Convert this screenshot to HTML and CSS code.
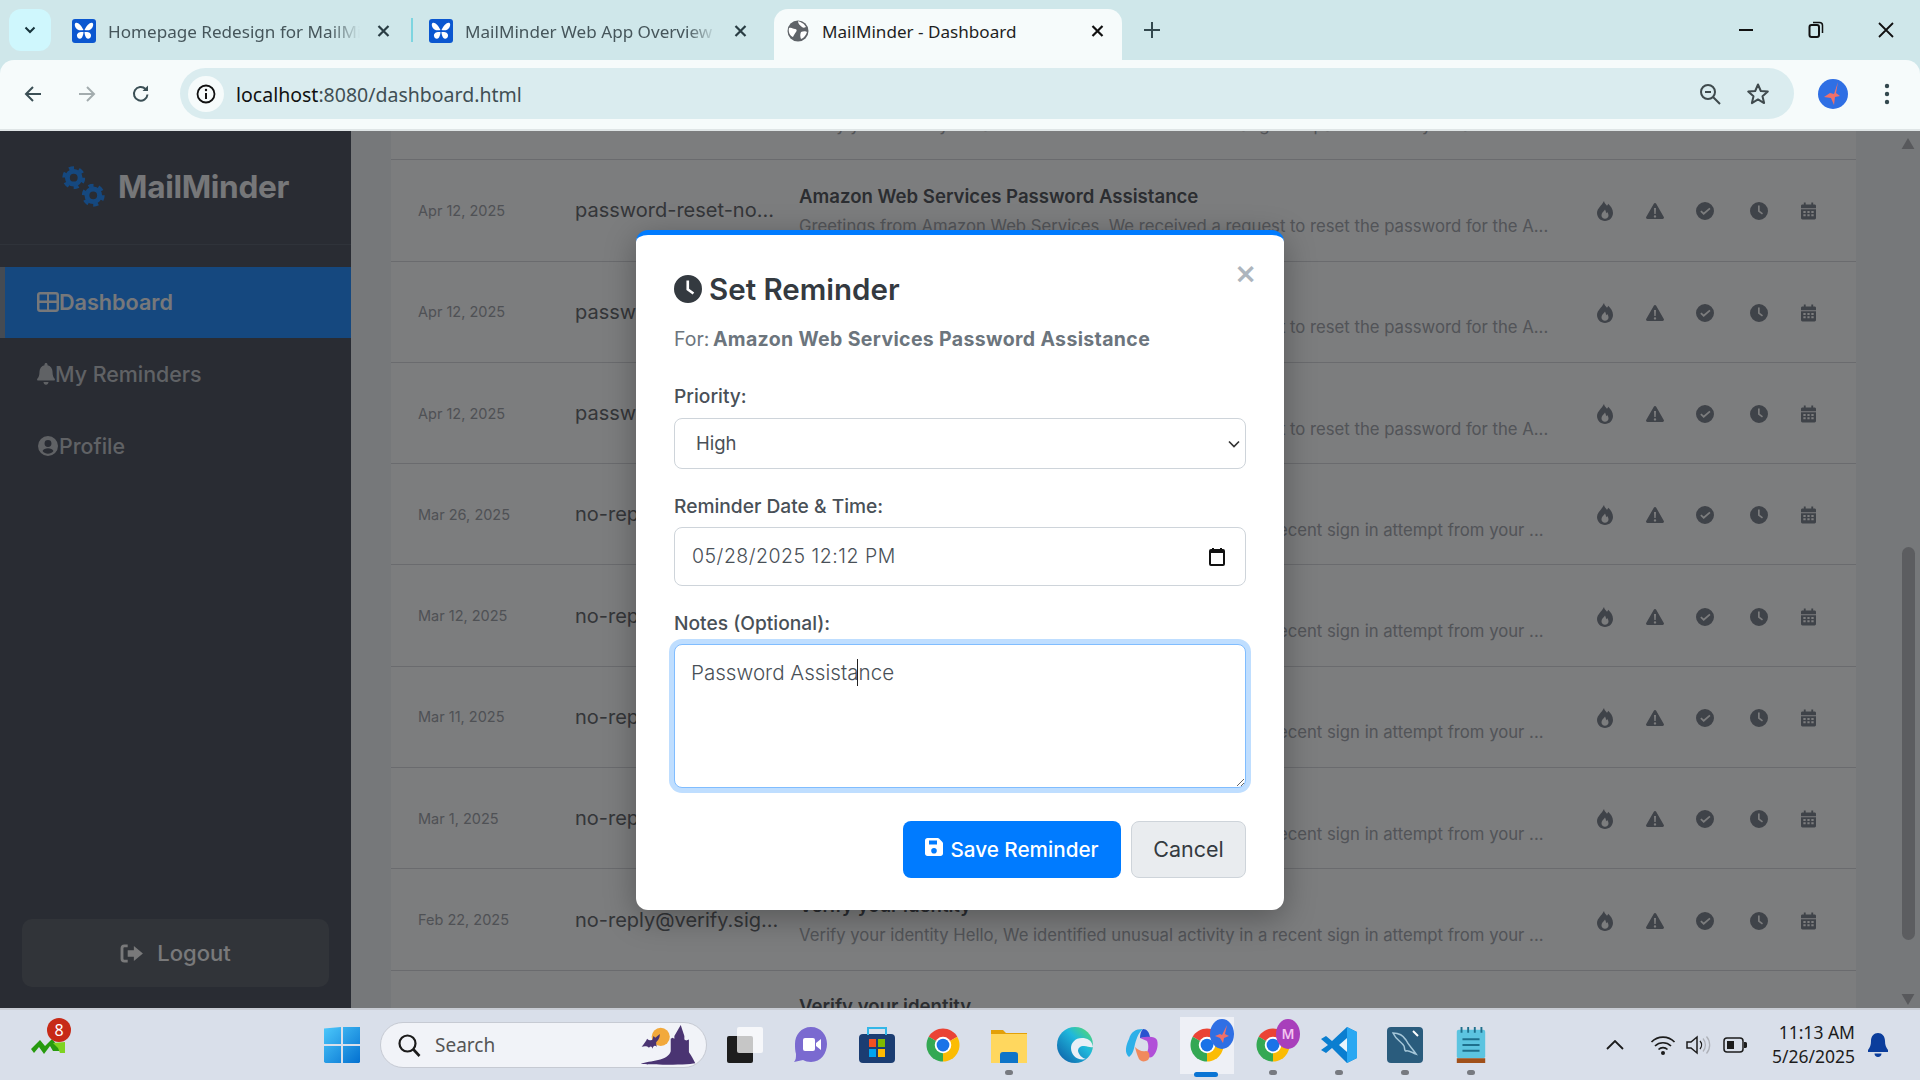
FILE: index.html
```html
<!DOCTYPE html>
<html lang="en">
<head>
<meta charset="utf-8">
<title>MailMinder - Dashboard</title>
<link rel="stylesheet" href="styles.css">
</head>
<body>
<svg class="defs" width="0" height="0" aria-hidden="true">
  <symbol id="i-fire" viewBox="0 0 16 20"><path fill-rule="evenodd" d="M7 0c.5 2.500 2 3.600 3 4.700.7-.5 1-1.200 1.200-1.900C13.800 5 16 8.500 16 12c0 4.400-3.600 8-8 8s-8-3.600-8-8C0 7.500 4.800 4.500 7 0zM8 8.500c-1 1.800-3.500 3-3.500 6 0 2 1.600 3.200 3.500 3.200s3.500-1.300 3.500-3.200c0-1.300-.6-2.600-1.400-3.500-.3.600-.6 1-1 1.200-.1-1.300-.5-2.500-1.100-3.700z"/></symbol>
  <symbol id="i-warn" viewBox="0 0 18 16"><path fill-rule="evenodd" d="M9 0c.5 0 1 .3 1.200.7l7.600 13.200c.5.900-.1 2.100-1.200 2.100H1.400C.3 16-.3 14.800.2 13.900L7.800.7C8 .3 8.500 0 9 0zM8 5l.3 6h1.400L10 5H8zm1 7.200a1.200 1.200 0 1 0 0 2.400 1.200 1.200 0 0 0 0-2.400z"/></symbol>
  <symbol id="i-check" viewBox="0 0 18 18"><path fill-rule="evenodd" d="M9 0a9 9 0 1 1 0 18A9 9 0 0 1 9 0zm4.400 5.800L7.700 10.600 5.400 8.500 4.300 9.700l3.400 3.200 6.800-5.900-1.100-1.200z"/></symbol>
  <symbol id="i-clock" viewBox="0 0 18 18"><path fill-rule="evenodd" d="M9 0a9 9 0 1 1 0 18A9 9 0 0 1 9 0zM8 3.500v6.100l4 3 1-1.400-3.300-2.400V3.500H8z"/></symbol>
  <symbol id="i-cal" viewBox="0 0 16 18"><path fill-rule="evenodd" d="M3 0h2v2h6V0h2v2h1.500C15.300 2 16 2.700 16 3.500V6H0V3.500C0 2.700.7 2 1.500 2H3V0zM0 7h16v9.500c0 .8-.7 1.500-1.500 1.500h-13C.7 18 0 17.300 0 16.500V7zm2.500 2v2h2.500V9H2.500zm4.300 0v2h2.400V9H6.800zm4.200 0v2h2.500V9H11zm-8.500 3.500v2h2.500v-2H2.500zm4.300 0v2h2.400v-2H6.800zm4.200 0v2h2.500v-2H11z"/></symbol>
  <symbol id="i-gear" viewBox="0 0 24 24"><circle cx="12" cy="12" r="6.500" fill="none" stroke="currentColor" stroke-width="5"/><circle cx="12" cy="12" r="10" fill="none" stroke="currentColor" stroke-width="3.500" stroke-dasharray="5.200 5.270"/></symbol>
  <symbol id="i-butterfly" viewBox="0 0 24 24"><rect width="24" height="24" rx="3" fill="#0b57d0"/><path fill="#fff" d="M11.500 11C9 6 6 3 3.500 4c-1.500 1-.5 5 2 6.500 1.500 1 4 1 6 .5zm1 0c2.500-5 5.500-8 8-7 1.500 1 .5 5-2 6.500-1.500 1-4 1-6 .5zM11.500 13c-4-.5-7 1-6.500 4 .5 3 3.500 3.500 5 1.500.8-1.500 1.500-3.500 1.500-5.500zm1 0c4-.5 7 1 6.500 4-.5 3-3.500 3.500-5 1.500-.8-1.500-1.500-3.500-1.500-5.500z"/></symbol>
  <symbol id="i-chrome" viewBox="0 0 48 48"><path fill="#ea4335" d="M24 24L4.950 13A22 22 0 0 1 43.050 13Z"/><path fill="#fbbc04" d="M24 24L43.050 13A22 22 0 0 1 24 46Z"/><path fill="#34a853" d="M24 24L24 46A22 22 0 0 1 4.950 13Z"/><circle cx="24" cy="24" r="11" fill="#fff"/><circle cx="24" cy="24" r="8.500" fill="#1a73e8"/></symbol>
  <symbol id="i-x" viewBox="0 0 13 12"><path d="M1.500 1l10 10M11.500 1l-10 10" fill="none" stroke="currentColor" stroke-width="2.200"/></symbol>
</svg>

<header class="tabstrip">
  <button class="tab-search" type="button"><svg width="12" height="8" viewBox="0 0 12 8"><path d="M1.500 1.500L6 6l4.500-4.500" fill="none" stroke="#16333a" stroke-width="2"/></svg></button>
  <div class="tab">
    <svg class="favicon"><use href="#i-butterfly"/></svg>
    <span class="tab-title">Homepage Redesign for MailMinder</span>
    <svg class="tab-close"><use href="#i-x"/></svg>
  </div>
  <div class="tab-sep"></div>
  <div class="tab">
    <svg class="favicon"><use href="#i-butterfly"/></svg>
    <span class="tab-title">MailMinder Web App Overview</span>
    <svg class="tab-close"><use href="#i-x"/></svg>
  </div>
  <div class="tab tab--active">
    <svg class="favicon" viewBox="0 0 24 24"><circle cx="12" cy="12" r="10.500" fill="#5f6368"/><path fill="#fff" d="M3 9c3-1 4 1 6 1s2 2 1 3-2 3-3 5c-3-1-5-5-4-9zm9-7c2 1 6 2 8 6-2 1-3 1-4 0-2-2-4-3-4-6zm3 11c2-1 5-1 6 0-1 3-3 6-6 7-1-2-1-5 0-7z"/></svg>
    <span class="tab-title tab-title--plain">MailMinder - Dashboard</span>
    <svg class="tab-close tab-close--active"><use href="#i-x"/></svg>
  </div>
  <svg class="new-tab" width="18" height="18" viewBox="0 0 18 18"><path d="M9 1v16M1 9h16" stroke="#33484e" stroke-width="2"/></svg>
  <div class="window-controls">
    <svg width="16" height="16" viewBox="0 0 16 16"><path d="M1 8h14" stroke="#111" stroke-width="2"/></svg>
    <svg width="16" height="18" viewBox="0 0 16 18"><rect x="1.500" y="4" width="9.500" height="12" rx="2" fill="none" stroke="#111" stroke-width="2"/><path d="M5 1.500h6.500a3 3 0 0 1 3 3V12" fill="none" stroke="#111" stroke-width="1.500"/></svg>
    <svg width="16" height="16" viewBox="0 0 16 16"><path d="M1 1l14 14M15 1L1 15" stroke="#111" stroke-width="1.800"/></svg>
  </div>
</header>

<div class="toolbar">
  <svg class="nav-btn" viewBox="0 0 20 20"><path d="M18 10H3M10 3l-7 7 7 7" fill="none" stroke="#3b4f55" stroke-width="2"/></svg>
  <svg class="nav-btn" viewBox="0 0 20 20"><path d="M2 10h15M10 3l7 7-7 7" fill="none" stroke="#a3acae" stroke-width="2"/></svg>
  <svg class="nav-btn" viewBox="0 0 20 20"><path d="M16.500 10.500A6.800 6.800 0 1 1 14.500 5" fill="none" stroke="#3b4f55" stroke-width="2"/><path d="M17 1.500V7h-5.500z" fill="#3b4f55"/></svg>
  <div class="omnibox">
    <span class="site-info"><svg width="20" height="20" viewBox="0 0 20 20"><circle cx="10" cy="10" r="8.500" fill="none" stroke="#111" stroke-width="1.800"/><path d="M10 9v6" stroke="#111" stroke-width="2"/><circle cx="10" cy="6" r="1.200" fill="#111"/></svg></span>
    <span class="url"><span class="url-host">localhost</span>:8080/dashboard.html</span>
    <svg class="omni-icon omni-icon--zoom" viewBox="0 0 22 22"><circle cx="9" cy="9" r="7" fill="none" stroke="#3f4a4d" stroke-width="2"/><path d="M6 9h6M14 14l7 7" stroke="#3f4a4d" stroke-width="2"/></svg>
    <svg class="omni-icon" viewBox="0 0 24 24"><path d="M12 2.500l2.800 6.500 7 .6-5.300 4.600 1.600 6.900-6.100-3.700-6.100 3.700 1.600-6.900L2.200 9.600l7-.6z" fill="none" stroke="#3f4a4d" stroke-width="2" stroke-linejoin="round"/></svg>
  </div>
  <svg class="avatar" viewBox="0 0 30 30"><circle cx="15" cy="15" r="15" fill="#2f6fe4"/><path d="M20 3l-2 11 4 3-5 1-1 8-3-7-7-1 6-4 4 1z" fill="#f0706a"/></svg>
  <svg class="menu-dots" width="6" height="22" viewBox="0 0 6 22"><circle cx="3" cy="3" r="2.200" fill="#33484e"/><circle cx="3" cy="11" r="2.200" fill="#33484e"/><circle cx="3" cy="19" r="2.200" fill="#33484e"/></svg>
</div>

<div class="app">
  <aside class="sidebar">
    <div class="brand">
      <svg class="brand-gears" viewBox="0 0 44 42"><use href="#i-gear" x="0" y="0" width="24" height="24"/><use href="#i-gear" x="20" y="18" width="24" height="24"/></svg>
      <span class="brand-name">MailMinder</span>
    </div>
    <nav class="nav">
      <a class="nav-item nav-item--active"><svg class="nav-icon" viewBox="0 0 22 20"><path fill-rule="evenodd" d="M3 0h16c1.700 0 3 1.300 3 3v14c0 1.700-1.300 3-3 3H3c-1.700 0-3-1.300-3-3V3c0-1.700 1.300-3 3-3zm-.5 3v5.500H10V2.500H3c-.3 0-.5.200-.5.500zm9.500-.5v6h7.500V3c0-.3-.2-.5-.5-.5h-7zm-9.500 8.500V17c0 .3.200.5.500.5h7V11H2.500zm9.500 0v6.500h7c.3 0 .5-.2.500-.5v-6H12z"/></svg>Dashboard</a>
      <a class="nav-item"><svg class="nav-icon nav-icon--bell" viewBox="0 0 18 22"><path d="M9 0c1 0 1.500.7 1.500 1.500v.7c3 .7 5 3.300 5 6.300 0 4 1 6 2.200 7.300.5.600.1 1.700-.8 1.700H1.100c-.9 0-1.300-1.100-.8-1.700C1.500 14.500 2.500 12.500 2.500 8.500c0-3 2-5.600 5-6.300v-.7C7.500.7 8 0 9 0zM6.500 19h5c0 1.500-1.100 2.800-2.500 2.800S6.500 20.500 6.500 19z"/></svg>My Reminders</a>
      <a class="nav-item"><svg class="nav-icon" viewBox="0 0 22 22"><path fill-rule="evenodd" d="M11 0a11 11 0 1 1 0 22A11 11 0 0 1 11 0zm0 4.500a3.800 3.800 0 1 0 0 7.600 3.800 3.800 0 0 0 0-7.600zM11 13.500c-2.800 0-5 1.100-6 3 1.400 1.900 3.600 3 6 3s4.600-1.100 6-3c-1-1.900-3.200-3-6-3z"/></svg>Profile</a>
    </nav>
    <button class="logout" type="button"><svg class="logout-icon" viewBox="0 0 24 20"><path d="M8 2H4.500C3.100 2 2 3.100 2 4.500v11C2 16.900 3.100 18 4.500 18H8" fill="none" stroke="currentColor" stroke-width="3"/><path fill="currentColor" d="M14.500 2L24 10l-9.500 8v-4.500H8v-7h6.500z"/></svg>Logout</button>
  </aside>

  <main class="main">
    <div class="list">
      <article class="row"><span class="date">Apr 12, 2025</span><span class="sender">password-reset-no...</span><div class="subject"><b class="title">Amazon Web Services Password Assistance</b><span class="preview">Verify your identity. Please use this one-time code to change the password for your acco...</span></div><div class="actions"><svg class="a-fire"><use href="#i-fire"/></svg><svg class="a-warn"><use href="#i-warn"/></svg><svg class="a-check"><use href="#i-check"/></svg><svg class="a-clock"><use href="#i-clock"/></svg><svg class="a-cal"><use href="#i-cal"/></svg></div></article>
      <article class="row"><span class="date">Apr 12, 2025</span><span class="sender">password-reset-no...</span><div class="subject"><b class="title">Amazon Web Services Password Assistance</b><span class="preview">Greetings from Amazon Web Services, We received a request to reset the password for the A...</span></div><div class="actions"><svg class="a-fire"><use href="#i-fire"/></svg><svg class="a-warn"><use href="#i-warn"/></svg><svg class="a-check"><use href="#i-check"/></svg><svg class="a-clock"><use href="#i-clock"/></svg><svg class="a-cal"><use href="#i-cal"/></svg></div></article>
      <article class="row"><span class="date">Apr 12, 2025</span><span class="sender">password-reset-no...</span><div class="subject"><b class="title">Amazon Web Services Password Assistance</b><span class="preview">Greetings from Amazon Web Services, We received a request to reset the password for the A...</span></div><div class="actions"><svg class="a-fire"><use href="#i-fire"/></svg><svg class="a-warn"><use href="#i-warn"/></svg><svg class="a-check"><use href="#i-check"/></svg><svg class="a-clock"><use href="#i-clock"/></svg><svg class="a-cal"><use href="#i-cal"/></svg></div></article>
      <article class="row"><span class="date">Apr 12, 2025</span><span class="sender">password-reset-no...</span><div class="subject"><b class="title">Amazon Web Services Password Assistance</b><span class="preview">Greetings from Amazon Web Services, We received a request to reset the password for the A...</span></div><div class="actions"><svg class="a-fire"><use href="#i-fire"/></svg><svg class="a-warn"><use href="#i-warn"/></svg><svg class="a-check"><use href="#i-check"/></svg><svg class="a-clock"><use href="#i-clock"/></svg><svg class="a-cal"><use href="#i-cal"/></svg></div></article>
      <article class="row"><span class="date">Mar 26, 2025</span><span class="sender">no-reply@verify.sig...</span><div class="subject"><b class="title">Verify your identity</b><span class="preview">Verify your identity Hello, We identified unusual activity in a recent sign in attempt from your ...</span></div><div class="actions"><svg class="a-fire"><use href="#i-fire"/></svg><svg class="a-warn"><use href="#i-warn"/></svg><svg class="a-check"><use href="#i-check"/></svg><svg class="a-clock"><use href="#i-clock"/></svg><svg class="a-cal"><use href="#i-cal"/></svg></div></article>
      <article class="row"><span class="date">Mar 12, 2025</span><span class="sender">no-reply@verify.sig...</span><div class="subject"><b class="title">Verify your identity</b><span class="preview">Verify your identity Hello, We identified unusual activity in a recent sign in attempt from your ...</span></div><div class="actions"><svg class="a-fire"><use href="#i-fire"/></svg><svg class="a-warn"><use href="#i-warn"/></svg><svg class="a-check"><use href="#i-check"/></svg><svg class="a-clock"><use href="#i-clock"/></svg><svg class="a-cal"><use href="#i-cal"/></svg></div></article>
      <article class="row"><span class="date">Mar 11, 2025</span><span class="sender">no-reply@verify.sig...</span><div class="subject"><b class="title">Verify your identity</b><span class="preview">Verify your identity Hello, We identified unusual activity in a recent sign in attempt from your ...</span></div><div class="actions"><svg class="a-fire"><use href="#i-fire"/></svg><svg class="a-warn"><use href="#i-warn"/></svg><svg class="a-check"><use href="#i-check"/></svg><svg class="a-clock"><use href="#i-clock"/></svg><svg class="a-cal"><use href="#i-cal"/></svg></div></article>
      <article class="row"><span class="date">Mar 1, 2025</span><span class="sender">no-reply@verify.sig...</span><div class="subject"><b class="title">Verify your identity</b><span class="preview">Verify your identity Hello, We identified unusual activity in a recent sign in attempt from your ...</span></div><div class="actions"><svg class="a-fire"><use href="#i-fire"/></svg><svg class="a-warn"><use href="#i-warn"/></svg><svg class="a-check"><use href="#i-check"/></svg><svg class="a-clock"><use href="#i-clock"/></svg><svg class="a-cal"><use href="#i-cal"/></svg></div></article>
      <article class="row"><span class="date">Feb 22, 2025</span><span class="sender">no-reply@verify.sig...</span><div class="subject"><b class="title">Verify your identity</b><span class="preview">Verify your identity Hello, We identified unusual activity in a recent sign in attempt from your ...</span></div><div class="actions"><svg class="a-fire"><use href="#i-fire"/></svg><svg class="a-warn"><use href="#i-warn"/></svg><svg class="a-check"><use href="#i-check"/></svg><svg class="a-clock"><use href="#i-clock"/></svg><svg class="a-cal"><use href="#i-cal"/></svg></div></article>
      <article class="row"><span class="date">Feb 20, 2025</span><span class="sender">no-reply@verify.sig...</span><div class="subject"><b class="title">Verify your identity</b><span class="preview">Verify your identity Hello, We identified unusual activity in a recent sign in attempt from your ...</span></div><div class="actions"><svg class="a-fire"><use href="#i-fire"/></svg><svg class="a-warn"><use href="#i-warn"/></svg><svg class="a-check"><use href="#i-check"/></svg><svg class="a-clock"><use href="#i-clock"/></svg><svg class="a-cal"><use href="#i-cal"/></svg></div></article>
    </div>
    <div class="scrollbar">
      <svg class="sb-arrow" viewBox="0 0 14 12"><path d="M7 0l7 12H0z"/></svg>
      <div class="sb-thumb"></div>
      <svg class="sb-arrow" viewBox="0 0 14 12"><path d="M0 0h14L7 12z"/></svg>
    </div>
  </main>

  <div class="overlay">
    <section class="modal">
      <span class="modal-close">×</span>
      <h2 class="modal-title"><svg class="modal-clock" viewBox="0 0 18 18"><use href="#i-clock"/></svg>Set Reminder</h2>
      <p class="modal-for">For: <strong>Amazon Web Services Password Assistance</strong></p>
      <form class="form">
        <div class="field">
          <label class="label label--first" for="prio">Priority:</label>
          <div class="select-wrap">
            <select class="control control--select" id="prio"><option>Low</option><option>Medium</option><option selected>High</option></select>
            <svg class="select-chevron" viewBox="0 0 12 8"><path d="M1 1.500l5 5 5-5" fill="none" stroke="#333" stroke-width="1.700"/></svg>
          </div>
        </div>
        <div class="field">
          <label class="label" for="when">Reminder Date &amp; Time:</label>
          <div class="date-wrap">
            <input class="control control--date" id="when" type="text" value="05/28/2025 12:12 PM">
            <svg class="date-icon" viewBox="0 0 16 18"><path d="M4 0v3M12 0v3" stroke="#111" stroke-width="2"/><path d="M1 2h14v3H1z" fill="#111"/><rect x="1" y="2" width="14" height="15" rx="1" fill="none" stroke="#111" stroke-width="2"/></svg>
          </div>
        </div>
        <div class="field">
          <label class="label" for="notes">Notes (Optional):</label>
          <div class="notes-wrap">
            <textarea class="control control--notes" id="notes">Password Assistance</textarea>
            <span class="caret"></span>
          </div>
        </div>
        <div class="buttons">
          <button class="btn btn--save" type="button"><svg class="save-icon" viewBox="0 0 18 18"><path fill="#fff" fill-rule="evenodd" d="M2.500 0h10.200c.500 0 1 .2 1.300.5l3.400 3.400c.4.400.6.900.6 1.400V15.500c0 1.400-1.100 2.500-2.500 2.500h-13C1.100 18 0 16.900 0 15.500v-13C0 1.100 1.100 0 2.500 0zM4 2.500v4h8v-4H4zM9 10a2.800 2.800 0 1 0 0 5.600A2.800 2.800 0 0 0 9 10z"/></svg>Save Reminder</button>
          <button class="btn btn--cancel" type="button">Cancel</button>
        </div>
      </form>
    </section>
  </div>
</div>

<footer class="taskbar">
  <div class="widget">
    <svg width="36" height="20" viewBox="0 0 36 20"><path d="M0 13l9-9 5 6 7-7 5 6 2-2v8h-6l-3-5-6 8-5-7-5 6z" fill="#279a0f"/><path d="M22 7l12-1v11h-5l-2-5z" fill="#7ed321"/></svg>
    <span class="widget-badge">8</span>
  </div>
  <svg class="start" viewBox="0 0 36 36"><defs><linearGradient id="win" x1="0" y1="0" x2="1" y2="1"><stop offset="0" stop-color="#4cc8fb"/><stop offset="1" stop-color="#0370d0"/></linearGradient></defs><path fill="url(#win)" d="M0 1.500L17 0v17H0zM19 0l17 0v17H19zM0 19h17v17H1.500L0 35zM19 19h17v16l-1 1H19z"/></svg>
  <div class="search">
    <svg class="search-icon" viewBox="0 0 24 24"><circle cx="10.500" cy="10.500" r="8" fill="none" stroke="#1b1b1b" stroke-width="2.200"/><path d="M16 16l6.500 7" stroke="#1b1b1b" stroke-width="2.600"/></svg>
    <span class="search-text">Search</span>
    <svg class="search-art" viewBox="0 0 60 44"><circle cx="22" cy="13" r="10" fill="#f2a93b"/><path d="M1 24c2-3 5-6 6-9 2 2 5 2 6 1l1-4 2 2 5-4c0 5-2 7-4 9 0 2 0 3 1 5-3-2-4-1-5 2-1-3-2-3-4-1-2-2-5-2-8-1z" fill="#4a3472"/><path d="M44 0l4 12v4l2 1 3-1v14c3 4 5 8 7 12-8 2-50 2-60 1 10-4 30-3 33-14V15l2-1 2 1v-3z" fill="#4a3472"/></svg>
  </div>
  <div class="apps">
    <div class="app-icon"><svg viewBox="0 0 36 36"><rect x="0" y="9" width="26" height="27" rx="2" fill="#1d1d1d"/><rect x="10" y="0" width="26" height="26" rx="2" fill="#fff" fill-opacity=".75"/></svg></div>
    <div class="app-icon"><svg viewBox="0 0 36 36"><path d="M18 0c10 0 16 8 16 17s-6 18-16 18c-3 0-6-1-8-2l-9 2c2-2 2-5 2-8C2 24 2 20 2 17 2 8 8 0 18 0z" fill="#7a6ad0"/><rect x="10" y="11" width="12" height="13" rx="2" fill="#fff"/><path d="M23 16l5-4v11l-5-4z" fill="#fff"/></svg></div>
    <div class="app-icon"><svg viewBox="0 0 36 36"><rect x="0" y="7" width="36" height="29" rx="4" fill="#1b3d72"/><path d="M9 8V1h18v7" fill="none" stroke="#33b7e8" stroke-width="2"/><rect x="10" y="12" width="7" height="8" fill="#f25022"/><rect x="19" y="12" width="7" height="8" fill="#7fba00"/><rect x="10" y="22" width="7" height="8" fill="#00a4ef"/><rect x="19" y="22" width="7" height="8" fill="#ffb900"/></svg></div>
    <div class="app-icon"><svg viewBox="0 0 48 48"><use href="#i-chrome"/></svg></div>
    <div class="app-icon app-icon--open"><svg viewBox="0 0 36 36"><path d="M0 3h12l3 3h21v30H0z" fill="#e3a008"/><rect y="7" width="36" height="29" fill="#ffd75e"/><path d="M9 36v-8c0-2 1-3 3-3h12c2 0 3 1 3 3v8z" fill="#0e74c8"/></svg></div>
    <div class="app-icon"><svg viewBox="0 0 36 36"><defs><linearGradient id="edge" x1="1" y1="0" x2="0" y2="1"><stop offset="0" stop-color="#5ede5e"/><stop offset=".4" stop-color="#1fb8dc"/><stop offset="1" stop-color="#0c59a4"/></linearGradient></defs><circle cx="18" cy="18" r="18" fill="url(#edge)"/><path d="M36 20c-1-7-6-9-11-9-7 0-11 5-11 10 0 7 6 13 15 11-4-1-7-4-8-8 0-3 2-5 6-5 4 0 6 2 9 1z" fill="#e9eff6"/></svg></div>
    <div class="app-icon"><svg viewBox="0 0 36 36"><path d="M6 12C8 5 12 2 20 2c-4 3-6 8-8 15-1 5-2 10-6 13C1 26 3 18 6 12z" fill="#2db0e8"/><path d="M20 2c4 0 6 3 7 8l-10 1c0-4 1-7 3-9z" fill="#2a52d0"/><path d="M17 11c8-2 15-2 17 2 2 6-1 14-5 17-2 1-5 0-7-1 4-5 4-11 2-15z" fill="#b14fd8"/><path d="M12 20c3 3 7 5 11 4 3 0 5 5 2 9-3 2-7 2-9-1-2-4-3-8-4-12z" fill="#f08a5d"/></svg></div>
    <div class="app-icon app-icon--active"><svg viewBox="0 0 48 48"><use href="#i-chrome"/></svg><svg class="app-pin" viewBox="0 0 24 30"><ellipse cx="12" cy="15" rx="12" ry="15" fill="#2f6fe4"/><path d="M17 6l-2 9 4 2-5 2-1 5-3-5-5-2 5-2 2 1z" fill="#f0706a"/></svg></div>
    <div class="app-icon app-icon--open"><svg viewBox="0 0 48 48"><use href="#i-chrome"/></svg><span class="app-pin app-pin--m">M</span></div>
    <div class="app-icon app-icon--open"><svg viewBox="0 0 36 36"><path d="M26 0l10 5v26l-10 5L11 21l-6 5-5-3 7-5-7-6 5-3 6 5z" fill="#0a7ed0"/><path d="M26 0l10 5v26l-10 5z" fill="#2aa8f2"/><path d="M26 11l-8 7 8 7z" fill="#e9f5fd"/></svg></div>
    <div class="app-icon app-icon--open"><svg viewBox="0 0 36 36"><rect width="36" height="36" rx="4" fill="#2a5c7d"/><path d="M6 6c6 0 10 2 13 7 3 6 6 8 10 14-5-2-8-4-10-3-2 0-1-3-2-5-2-4-8-6-11-13z" fill="none" stroke="#a5c6d8" stroke-width="1.500"/><path d="M26 4l5 5" stroke="#fff" stroke-width="2"/></svg></div>
    <div class="app-icon app-icon--open"><svg viewBox="0 0 30 38"><rect y="3" width="30" height="30" rx="2" fill="#5cc4e0"/><path d="M5 0v6M12 0v6M19 0v6M26 0v6" stroke="#1e6f8c" stroke-width="2"/><path d="M6 13h18M6 19h18M6 25h18" stroke="#1e6f8c" stroke-width="2"/><rect y="33" width="30" height="5" fill="#a0501a"/></svg></div>
  </div>
  <div class="tray">
    <svg class="tray-chev" width="18" height="10" viewBox="0 0 18 10"><path d="M1 9l8-8 8 8" fill="none" stroke="#1c1c1c" stroke-width="1.800"/></svg>
    <svg class="tray-wifi" width="26" height="20" viewBox="0 0 26 20"><path d="M1.500 7a16 16 0 0 1 23 0M5 11a11.500 11.500 0 0 1 16 0M8.500 14.500a6.500 6.500 0 0 1 9 0" fill="none" stroke="#1c1c1c" stroke-width="1.700"/><circle cx="13" cy="18" r="2" fill="#1c1c1c"/></svg>
    <svg class="tray-vol" width="26" height="20" viewBox="0 0 26 20"><path d="M1 7v6h4l6 5V2L5 7z" fill="none" stroke="#1c1c1c" stroke-width="1.500"/><path d="M14 6a6 6 0 0 1 0 8" fill="none" stroke="#1c1c1c" stroke-width="1.300"/><path d="M17 3.500a10 10 0 0 1 0 13M20.500 1.500a13 13 0 0 1 0 17" fill="none" stroke="#aeb1b8" stroke-width="1.300"/></svg>
    <svg class="tray-batt" width="25" height="16" viewBox="0 0 25 16"><rect x="1" y="1" width="19" height="14" rx="3" fill="none" stroke="#1c1c1c" stroke-width="1.500"/><rect x="4" y="4" width="7" height="8" fill="#1c1c1c"/><path d="M21 5h1.500c1 0 1.500.8 1.500 1.500v3c0 .7-.5 1.500-1.500 1.500H21z" fill="#1c1c1c"/></svg>
    <div class="clock"><span>11:13 AM</span><span>5/26/2025</span></div>
    <svg class="tray-bell" width="20" height="24" viewBox="0 0 20 24"><path d="M10 0c4 0 7 3 7 8 0 4 1 6 3 9v2H0v-2c2-3 3-5 3-9 0-5 3-8 7-8zM6.500 20.500h7c0 2-1.500 3.500-3.500 3.500s-3.500-1.500-3.500-3.500z" fill="#0b3d9c"/></svg>
  </div>
</footer>
</body>
</html>
```

FILE: styles.css
```css
* { box-sizing: border-box; }
html, body { margin: 0; height: 100%; }
body {
  width: 1920px;
  height: 1080px;
  overflow: hidden;
  display: flex;
  flex-direction: column;
  font-family: Inter, "Open Sans", sans-serif;
  background: #cfe7ea;
}
.defs { position: absolute; }

/* browser chrome */
.tabstrip {
  height: 60px;
  flex: none;
  display: flex;
  align-items: flex-start;
  padding-left: 9px;
  background: #cfe7ea;
  font-family: "Noto Sans", sans-serif;
}
.tab-search {
  width: 42px;
  height: 42px;
  margin-top: 9px;
  border: 0;
  border-radius: 12px;
  background: #cff7fd;
  display: flex;
  align-items: center;
  justify-content: center;
  padding: 0;
}
.tab {
  width: 360px;
  height: 51px;
  margin-top: 9px;
  padding: 0 0 7px 21px;
  display: flex;
  align-items: center;
  color: #46565b;
  font-size: 17.100px;
  flex: none;
}
.tab-sep { width: 2px; height: 24px; margin: 18px -5px 0 0; background: #7dd5e0; flex: none; }
.favicon { width: 24px; height: 24px; flex: none; margin-right: 12px; }
.tab-title {
  width: 252px;
  flex: none;
  overflow: hidden;
  white-space: nowrap;
  -webkit-mask-image: linear-gradient(90deg, #000 88%, transparent);
  mask-image: linear-gradient(90deg, #000 88%, transparent);
}
.tab-title--plain { -webkit-mask-image: none; mask-image: none; color: #1f1f1f; width: 264px; }
.tab-close { width: 13px; height: 12px; margin-left: 17px; flex: none; color: #2a3d44; }
.tab--active {
  width: 348px;
  margin-left: 6px;
  padding-left: 12px;
  background: #f6fbfb;
  border-radius: 14px 14px 0 0;
}
.tab-close--active { margin-left: 5px; color: #111; }
.new-tab { margin: 21px 0 0 21px; flex: none; }
.window-controls {
  margin-left: auto;
  margin-top: 21px;
  display: flex;
  align-items: center;
  gap: 54px;
  padding-right: 26px;
}
.toolbar {
  height: 71px;
  flex: none;
  display: flex;
  align-items: center;
  padding: 0 0 2px 23px;
  background: #f6fbfb;
  border-bottom: 2px solid #dfe5e6;
  border-radius: 14px 14px 0 0;
}
.nav-btn { width: 20px; height: 20px; flex: none; margin-right: 34px; }
.omnibox {
  width: 1614px;
  flex: none;
  height: 51px;
  margin-left: -5px;
  margin-right: 24px;
  display: flex;
  align-items: center;
  padding: 0 24px 0 8px;
  background: #daecef;
  border-radius: 26px;
}
.site-info {
  width: 36px;
  height: 36px;
  border-radius: 50%;
  background: #f6fbfb;
  display: flex;
  align-items: center;
  justify-content: center;
  margin-right: 12px;
}
.url { font-family: "Noto Sans", sans-serif; font-size: 19.500px; color: #3f4f54; padding-top: 1px; }
.url-host { color: #111; }
.omni-icon { width: 24px; height: 24px; margin-left: 25px; }
.omni-icon--zoom { margin-left: auto; width: 22px; height: 22px; }
.avatar { width: 30px; height: 30px; flex: none; }
.menu-dots { margin-left: 36px; flex: none; }

/* page */
.app {
  position: relative;
  height: 877px;
  flex: none;
  display: flex;
  overflow: hidden;
}
.sidebar {
  width: 351px;
  flex: none;
  display: flex;
  flex-direction: column;
  background: #525866;
  color: #eef0f4;
}
.brand {
  height: 114px;
  flex: none;
  display: flex;
  align-items: center;
  padding: 0 0 2px 62px;
  border-bottom: 1px solid #5f6674;
}
.brand-gears { width: 43px; height: 41px; color: #2a90fe; margin-right: 13px; }
.brand-name { font-size: 31.600px; font-weight: 700; letter-spacing: -.3px; color: #eceef2; }
.nav { padding-top: 22px; display: flex; flex-direction: column; gap: 1px; }
.nav-item {
  height: 71px;
  display: flex;
  align-items: center;
  padding: 0 0 2px 37px;
  font-size: 21.400px;
  font-weight: 500;
  color: #c0c4cb;
}
.nav-item--active {
  background: #2a90fe;
  border-left: 5px solid #8b97a6;
  padding-left: 32px;
  color: #eef1f5;
  font-weight: 600;
  font-size: 21.600px;
}
.nav-icon { width: 22px; height: 20px; fill: currentColor; flex: none; }
.nav-icon--bell { width: 18px; height: 22px; }
.logout {
  margin: auto 22px 21px;
  height: 68px;
  display: flex;
  align-items: center;
  justify-content: center;
  gap: 14px;
  border: 0;
  border-radius: 10px;
  background: #626872;
  color: #f2f3f5;
  font: 500 22px Inter, sans-serif;
}
.logout-icon { width: 23px; height: 19px; }

.main {
  flex: 1;
  display: flex;
  padding-left: 40px;
  background: #ecf0f4;
  min-width: 0;
}
.list { width: 1465px; flex: none; margin-top: -72px; background: #f9fafc; }
.row {
  height: 101.300px;
  display: grid;
  grid-template-columns: 157px 224px 781px 1fr;
  align-items: center;
  padding-left: 27px;
  border-bottom: 1px solid #d4d6dc;
}
.date { font-size: 14.500px; color: #9ea3ab; }
.sender { font-size: 20px; color: #696d73; white-space: nowrap; }
.subject { display: flex; flex-direction: column; gap: 9px; padding-top: 2px; min-width: 0; }
.title { font-size: 18.600px; line-height: 21px; font-weight: 600; color: #565b62; white-space: nowrap; }
.preview { font-size: 16.700px; line-height: 21px; color: #a4a8b0; white-space: nowrap; overflow: hidden; }
.actions { display: flex; align-items: center; padding-top: 2px; fill: #7f8692; }
.actions svg { flex: none; }
.a-fire { width: 16px; height: 20px; margin-left: 17px; }
.a-warn { width: 18px; height: 16px; margin-left: 33px; }
.a-check { width: 18px; height: 18px; margin-left: 32px; }
.a-clock { width: 18px; height: 18px; margin-left: 36px; }
.a-cal { width: 15px; height: 18px; margin-left: 33px; }

.scrollbar {
  width: 64px;
  flex: none;
  display: flex;
  flex-direction: column;
  align-items: flex-end;
  padding: 7px 5px 3px 0;
}
.sb-arrow { width: 14px; height: 11px; fill: #b0b2b8; }
.sb-thumb { width: 13px; height: 393px; margin-top: 398px; margin-bottom: auto; background: #b8bac0; border-radius: 7px; }

.overlay {
  position: absolute;
  inset: 0;
  display: flex;
  align-items: center;
  justify-content: center;
  background: rgba(0, 0, 0, .5);
}
.modal {
  position: relative;
  width: 648px;
  height: 680px;
  padding: 37px 38px 32px 38px;
  background: #fff;
  border-top: 5px solid #007bff;
  border-radius: 12px;
  box-shadow: 0 8px 32px rgba(0, 0, 0, .3);
  color: #495057;
}
.modal-close { position: absolute; top: 17px; right: 27px; font-size: 34px; line-height: 40px; font-weight: 500; color: #adb5bd; }
.modal-title { margin: 0; display: flex; align-items: center; font-size: 29.500px; line-height: 34px; font-weight: 600; color: #343a40; }
.modal-clock { width: 28px; height: 28px; margin-right: 7px; fill: #343a40; }
.modal-for { margin: 19px 0 31px; font-size: 19.500px; line-height: 28px; color: #6c757d; }
.modal-for strong { font-weight: 700; letter-spacing: .35px; margin-left: -2px; }
.form { display: flex; flex-direction: column; }
.field { display: flex; flex-direction: column; margin-bottom: 25px; }
.label { font-size: 19.200px; line-height: 24px; font-weight: 500; color: #495057; margin-bottom: 9px; }
.label--first { margin-bottom: 10px; }
.control {
  width: 100%;
  border: 1px solid #ced4da;
  border-radius: 8px;
  background: #fff;
  font: 18.500px Inter, sans-serif;
  color: #495057;
}
.select-wrap { position: relative; display: flex; }
.control--select { height: 51px; padding: 0 21px; appearance: none; -webkit-appearance: none; }
.select-chevron { position: absolute; right: 6px; top: 22px; width: 12px; height: 8px; }
.date-wrap { position: relative; display: flex; }
.control--date { height: 59px; padding: 0 17px; font-size: 19.500px; letter-spacing: .5px; font-weight: 300; }
.date-icon { position: absolute; right: 21px; top: 21px; width: 16px; height: 18px; }
.notes-wrap { position: relative; display: flex; }
.control--notes {
  height: 144px;
  padding: 14px 16px;
  line-height: 27px;
  font-size: 20.600px;
  font-weight: 300;
  outline: 0;
  border-color: #80bdff;
  box-shadow: 0 0 0 5px #bfdeff;
  resize: both;
}
.caret { position: absolute; left: 183px; top: 15px; width: 1px; height: 27px; background: #222; }
.buttons { display: flex; justify-content: flex-end; gap: 10px; margin-top: 8px; }
.btn {
  height: 57px;
  border-radius: 8px;
  font: 500 20.700px Inter, sans-serif;
  display: flex;
  align-items: center;
  justify-content: center;
}
.btn--save { width: 218px; border: 0; background: #007bff; color: #fff; gap: 7px; padding-right: 6px; }
.save-icon { width: 18px; height: 18px; margin-top: -5px; }
.btn--cancel { width: 115px; border: 1px solid #ced4da; background: #e9ecef; color: #343a40; font-weight: 400; font-size: 21.500px; }

/* taskbar */
.taskbar {
  height: 72px;
  flex: none;
  display: flex;
  align-items: center;
  background: #d9dfea;
  border-top: 2px solid #c8ccd4;
  font-family: "Noto Sans", sans-serif;
}
.widget { position: relative; width: 36px; height: 20px; margin-left: 31px; margin-top: 2px; flex: none; }
.widget svg { display: block; }
.widget-badge {
  position: absolute;
  left: 16px;
  top: -18px;
  width: 24px;
  height: 24px;
  border-radius: 50%;
  background: #c72a17;
  color: #fff;
  font-size: 16px;
  line-height: 24px;
  text-align: center;
}
.start { width: 36px; height: 36px; margin-left: 257px; flex: none; }
.search {
  position: relative;
  width: 327px;
  height: 46px;
  margin-left: 20px;
  display: flex;
  align-items: center;
  padding-left: 16px;
  border-radius: 23px;
  background: #f1f3f8;
  border: 1px solid #c6cad3;
  flex: none;
}
.search-icon { width: 24px; height: 24px; }
.search-text { margin-left: 14px; font-size: 19px; color: #555; }
.search-art { position: absolute; right: 8px; bottom: 2px; width: 60px; height: 40px; }
.apps { display: flex; margin-left: 5px; align-items: center; height: 100%; flex: none; }
.app-icon {
  position: relative;
  width: 66px;
  height: 100%;
  display: flex;
  align-items: center;
  justify-content: center;
}
.app-icon svg { width: 36px; height: 36px; }
.app-icon--open::after {
  content: "";
  position: absolute;
  left: 29px;
  bottom: 5px;
  width: 8px;
  height: 5px;
  border-radius: 3px;
  background: #777a80;
}
.app-icon--active { background: linear-gradient(#eef0f6, #eef0f6) 6px 7px / 54px 57px no-repeat; }
.app-icon--active::after {
  content: "";
  position: absolute;
  left: 20px;
  bottom: 3px;
  width: 24px;
  height: 5px;
  border-radius: 3px;
  background: #0a74d4;
}
.app-icon .app-pin {
  position: absolute;
  left: 36px;
  top: 9px;
  width: 24px;
  height: 30px;
}
.app-pin--m {
  border-radius: 50%;
  background: #a83fbb;
  color: #f3c4f0;
  font-size: 14px;
  font-weight: 600;
  line-height: 30px;
  text-align: center;
}
.tray { flex: 1; display: flex; align-items: center; color: #1c1c1c; }
.tray-chev { margin-left: 102px; }
.tray-wifi { margin-left: 26px; }
.tray-vol { margin-left: 10px; }
.tray-batt { margin-left: 11px; }
.clock {
  margin-left: 27px;
  margin-top: -3px;
  display: flex;
  flex-direction: column;
  align-items: flex-end;
  font-size: 17.500px;
  line-height: 24px;
  width: 80px;
}
.tray-bell { margin-left: 13px; }
```
